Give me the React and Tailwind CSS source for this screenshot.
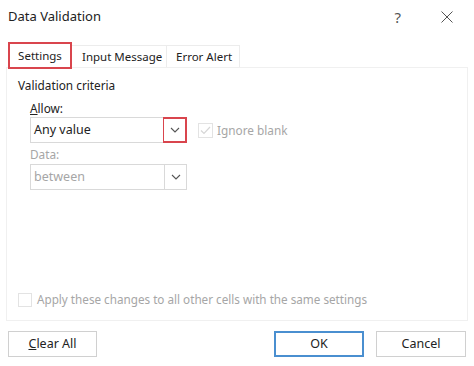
import React from 'react';

const Chevron = ({ color = '#555' }) => (
    <svg width="10" height="6" viewBox="0 0 10 6" fill="none">
        <path d="M1 1l4 4 4-4" stroke={color} strokeWidth="1.1" />
    </svg>
);

const Select = ({ value, disabled, highlight }) => (
    <div className="flex h-[26px] w-[157px] border border-[#d9d9d9] bg-white">
        <div className={`flex-1 flex items-center pl-[3px] text-[12.5px] ${disabled ? 'text-[#a6a6a6]' : 'text-[#222]'}`}>
            {value}
        </div>
        <div
            className={`w-[22px] flex items-center justify-center border-l ${
                highlight ? 'border-2 border-[#d9454d] -my-px -mr-px w-[24px]' : 'border-[#d9d9d9]'
            }`}
        >
            <Chevron />
        </div>
    </div>
);

const App = () => {
    return (
        <div
            className="w-[474px] h-[366px] bg-white relative overflow-hidden text-[#222]"
            style={{ fontFamily: '"Noto Sans", "Open Sans", sans-serif' }}
        >
            {/* Title bar */}
            <div className="flex items-center h-[34px] pl-[8px]">
                <span className="text-[13px] text-[#222]">Data Validation</span>
                <span className="ml-auto text-[15px] text-[#555] mr-[40px]">?</span>
                <svg width="12" height="12" viewBox="0 0 12 12" className="mr-[21px]">
                    <path d="M0.5 0.5l11 11M11.5 0.5l-11 11" stroke="#555" strokeWidth="1" />
                </svg>
            </div>

            {/* Tabs */}
            <div className="flex items-end h-[33px] pl-[8px] text-[11.5px]">
                <div className="h-[27px] w-[64px] flex items-center justify-center border-2 border-[#d9454d] bg-white mb-[-2px] z-10 relative">
                    Settings
                </div>
                <div className="h-[22px] w-[95px] pl-[10px] flex items-center border-t border-r border-[#ececec]">
                    Input Message
                </div>
                <div className="h-[22px] w-[73px] pl-[9px] flex items-center border-t border-r border-[#ececec]">
                    Error Alert
                </div>
            </div>

            {/* Panel */}
            <div className="mx-[6px] h-[254px] border border-[#f0f0f0] px-[11px] pt-[9px] flex flex-col">
                <div className="text-[11.8px]">Validation criteria</div>
                <div className="pl-[12px] pt-[5px]">
                    <div className="text-[11.8px]"><span className="underline">A</span>llow:</div>
                    <div className="flex items-center">
                        <Select value="Any value" highlight />
                        <div className="ml-[11px] w-[15px] h-[15px] border border-[#e3e3e3] flex items-center justify-center">
                            <svg width="11" height="9" viewBox="0 0 11 9">
                                <path d="M1 4.5l3 3 6-6.5" stroke="#d6d6d6" strokeWidth="1.2" fill="none" />
                            </svg>
                        </div>
                        <span className="ml-[4px] text-[11.8px] text-[#a6a6a6]">Ignore blank</span>
                    </div>
                    <div className="text-[11.8px] text-[#a6a6a6] mt-[3px]">Data:</div>
                    <div>
                        <Select value="between" disabled />
                    </div>
                </div>
                <div className="mt-auto mb-[11px] flex items-center">
                    <div className="w-[14px] h-[14px] border border-[#e3e3e3]"></div>
                    <span className="ml-[5px] text-[11.7px] text-[#a6a6a6]">
                        Apply these changes to all other cells with the same settings
                    </span>
                </div>
            </div>

            {/* Buttons */}
            <div className="flex items-center mt-[10px] px-[8px] text-[12.5px]">
                <button className="w-[89px] h-[26px] border border-[#d0d0d0] bg-white">
                    <span className="underline">C</span>lear All
                </button>
                <button className="ml-auto w-[90px] h-[26px] border-2 border-[#4a8fd0] bg-white">OK</button>
                <button className="ml-[12px] w-[90px] h-[26px] border border-[#d0d0d0] bg-white">Cancel</button>
            </div>
        </div>
    );
};

export default App;
